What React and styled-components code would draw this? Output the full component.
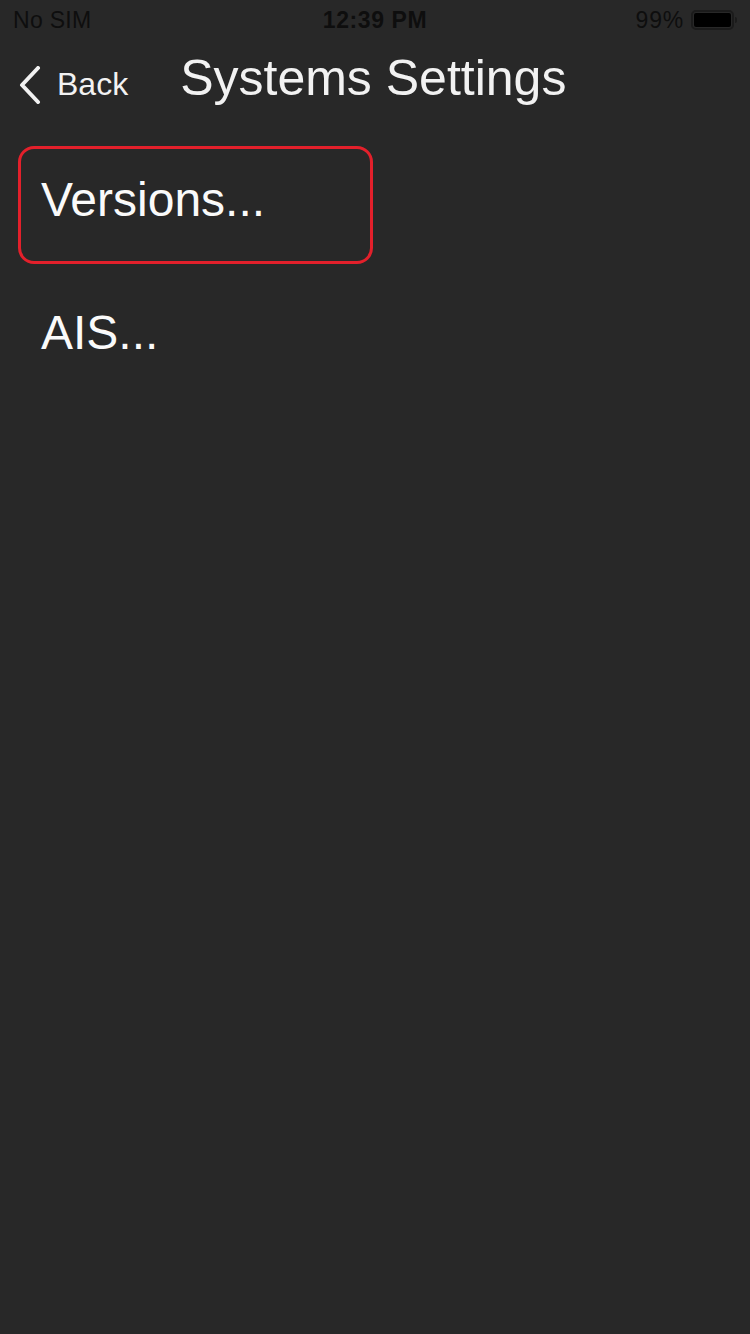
import React from 'react';
import styled, { createGlobalStyle, css } from 'styled-components';

const GlobalStyle = createGlobalStyle`
  html, body {
    margin: 0;
    padding: 0;
    background: #282828;
  }
  body {
    font-family: "Liberation Sans", Arial, sans-serif;
  }
`;

const Screen = styled.div`
  width: 750px;
  min-height: 1334px;
  background: #282828;
  display: flex;
  flex-direction: column;
`;

const StatusBar = styled.div`
  height: 40px;
  display: grid;
  grid-template-columns: 1fr auto 1fr;
  align-items: center;
  padding: 0 13px 0 13px;
  color: #0e0e0e;
  font-size: 23px;
`;

const Carrier = styled.span`
  justify-self: start;
  letter-spacing: 0.3px;
`;

const Clock = styled.span`
  font-weight: bold;
  letter-spacing: 0.6px;
`;

const BatteryGroup = styled.span`
  justify-self: end;
  display: flex;
  align-items: center;
  gap: 7px;
  letter-spacing: 0.8px;
`;

const Battery = styled.span`
  position: relative;
  width: 43px;
  height: 20px;
  margin-right: 3px;
  box-sizing: border-box;
  border: 2px solid #1b1b1b;
  border-radius: 5px;
  padding: 1px;
  display: flex;

  &::before {
    content: '';
    flex: 1;
    background: #000;
    border-radius: 2px;
  }

  &::after {
    content: '';
    position: absolute;
    right: -5px;
    top: 5px;
    width: 2px;
    height: 6px;
    background: #1b1b1b;
    border-radius: 0 2px 2px 0;
  }
`;

const NavBar = styled.div`
  display: flex;
  align-items: baseline;
  padding: 10px 18px 0 18px;
`;

const BackButton = styled.div`
  display: flex;
  align-items: baseline;
  color: #f2f2f2;
  font-size: 32px;
  line-height: 56px;
`;

const Chevron = styled.svg`
  align-self: flex-start;
  margin-top: 10px;
  margin-right: 15px;
  width: 24px;
  height: 38px;
`;

const Title = styled.h1`
  margin: 0 0 0 52px;
  font-weight: normal;
  font-size: 50px;
  line-height: 56px;
  color: #f2f2f2;
`;

const List = styled.div`
  display: flex;
  flex-direction: column;
  gap: 15px;
  padding: 34px 18px;
`;

const Row = styled.div`
  box-sizing: border-box;
  width: 355px;
  height: 118px;
  padding: 23px 20px 0;
  border: 3px solid transparent;
  border-radius: 16px;
  color: #fafafa;
  font-size: 48px;
  line-height: 56px;
  ${(props) => props.selected && css`
    border-color: #e3202b;
  `}
`;

const items = [
  { label: 'Versions...', selected: true },
  { label: 'AIS...', selected: false }
];

const App = () => {
  return (
    <Screen>
      <GlobalStyle />
      <StatusBar>
        <Carrier>No SIM</Carrier>
        <Clock>12:39 PM</Clock>
        <BatteryGroup>
          <span>99%</span>
          <Battery />
        </BatteryGroup>
      </StatusBar>
      <NavBar>
        <BackButton>
          <Chevron viewBox="0 0 24 38" fill="none">
            <path d="M20 2 L4 19 L20 36" stroke="#f2f2f2" strokeWidth="4" strokeLinecap="round" strokeLinejoin="round" />
          </Chevron>
          Back
        </BackButton>
        <Title>Systems Settings</Title>
      </NavBar>
      <List>
        {items.map((item) => (
          <Row key={item.label} selected={item.selected}>{item.label}</Row>
        ))}
      </List>
    </Screen>
  );
};

export default App;
